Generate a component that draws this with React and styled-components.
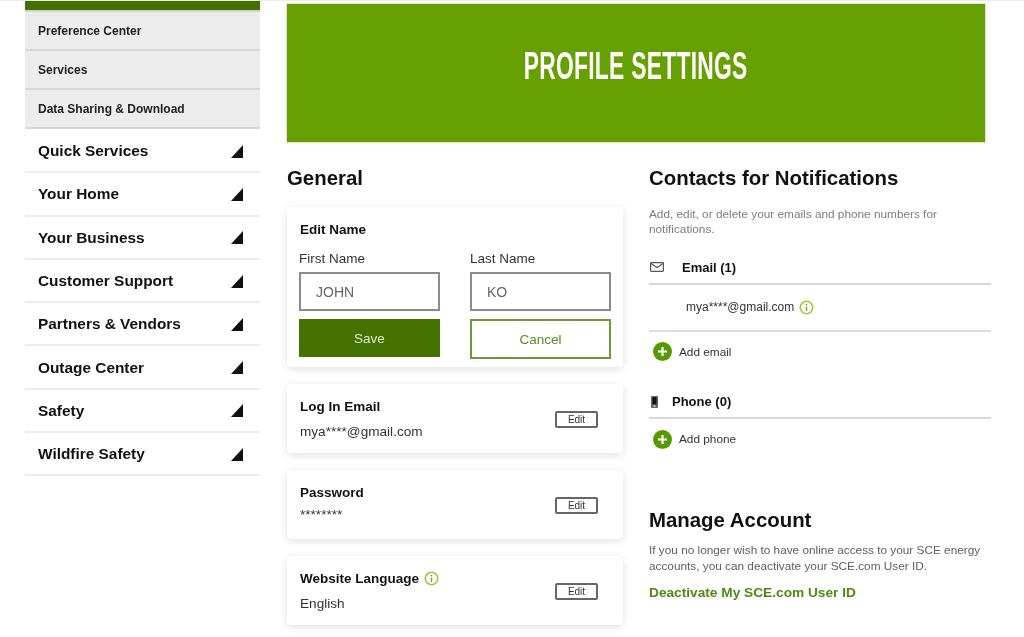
import React from "react";
import styled, { createGlobalStyle } from "styled-components";

const Global = createGlobalStyle`
  html, body { margin: 0; padding: 0; background: #fff; }
  body { font-family: "Liberation Sans", Arial, sans-serif; color: #111; }
  * { box-sizing: border-box; }
`;
const Page = styled.div`
  width: 1024px; height: 637px; overflow: hidden; display: flex; align-items: flex-start;
  padding-left: 25px; border-top: 1px solid #ececec; background: #fff; filter: blur(.3px);
`;
const Sidebar = styled.nav`width: 235px; flex: none; margin-right: 27px; margin-top: -1px;`;
const GreenTop = styled.div`height: 12px; background: #437200; border-bottom: 2px solid #d0d6c6;`;
const SubItem = styled.div`
  height: 39px; background: #ececec; border-bottom: 2px solid #d6d6d6;
  display: flex; align-items: center; padding-left: 13px;
  font-size: 12px; font-weight: 700; color: #222;
`;
const NavList = styled.div`padding-top: 1px;`;
const NavItem = styled.div`
  height: 43.3px; border-bottom: 2px solid #ececec; display: flex; align-items: center;
  justify-content: space-between; padding: 1px 17px 0 13px;
  font-size: 15.4px; font-weight: 700; color: #111;
`;
const Main = styled.main`flex: none; width: 704px; padding-top: 3px;`;
const Banner = styled.div`
  width: 698px; height: 138px; background: #669f00; display: flex; align-items: center; justify-content: center;
  box-shadow: 0 0 0 .5px #b9d28f;
`;
const BannerTitle = styled.h1`
  margin: 0 0 14px; color: #fff; font-size: 38px; line-height: 44px; font-weight: 700; white-space: nowrap;
  transform: scaleX(.6); letter-spacing: .5px;
`;
const Columns = styled.div`display: flex; gap: 26px; padding-top: 24px;`;
const Left = styled.section`width: 336px; flex: none;`;
const Right = styled.section`width: 342px; flex: none;`;
const Heading = styled.h2`margin: 0; font-size: 20.4px; line-height: 24px; font-weight: 700; color: #111;`;
const Card = styled.div`
  background: #fff; border-radius: 4px; box-shadow: 0 2px 9px rgba(0,0,0,.12); margin-top: 17px;
  padding: ${p => p.$edit ? "14px 12px 10px 12px" : "14px 25px 0 13px"}; height: ${p => p.$edit ? "160px" : "69px"};
  display: ${p => p.$edit ? "block" : "flex"}; justify-content: space-between; align-items: center;
`;
const CardTitle = styled.div`
  font-size: 13.5px; line-height: 17px; font-weight: 700; color: #111; display: flex; align-items: center; gap: 1px;
`;
const EditTitle = styled(CardTitle)`padding-left: 1px;`;
const CardValue = styled.div`
  font-size: 13.6px; line-height: 17px; color: #333; margin-top: ${p => p.$stars ? "5px" : "8px"};
`;
const CardText = styled.div`align-self: flex-start;`;
const NameGrid = styled.div`display: grid; grid-template-columns: 141px 141px; column-gap: 30px; margin-top: 13px;`;
const FieldLabel = styled.div`font-size: 13.5px; line-height: 15px; color: #333; margin-bottom: 6px;`;
const Input = styled.div`
  height: 39px; border: 2px solid #8c8c8c; display: flex; align-items: center; padding-left: 15px;
  font-size: 14px; color: #666;
`;
const Btn = styled.div`
  height: ${p => p.$outline ? "40px" : "38px"}; margin-top: 8px; display: flex; align-items: center; justify-content: center;
  font-size: 13.5px; background: ${p => p.$outline ? "#fff" : "#437200"}; color: ${p => p.$outline ? "#5a8a20" : "#dfe8cf"};
  border: ${p => p.$outline ? "2px solid #6c9a38" : "none"};
`;
const EditBtn = styled.div`
  width: 43px; height: 17px; border: 2px solid #666; border-radius: 2px; display: flex; align-items: center;
  justify-content: center; font-size: 10px; color: #333; margin-top: -13px; flex: none;
`;
const Desc = styled.p`margin: 17px 0 0; font-size: 11.8px; line-height: 15px; color: #7c7c7c;`;
const ContactHead = styled.div`
  display: flex; align-items: center; height: 29px; border-bottom: 2px solid #d8d8d8;
  font-size: 13px; font-weight: 700; color: #111; margin-top: 18.5px; padding-bottom: 4px; gap: ${p => p.$gap}px;
`;
const EmailRow = styled.div`
  height: 47px; border-bottom: 2px solid #dcdcdc; display: flex; align-items: center; gap: 1px;
  padding-left: 37px; font-size: 12px; color: #333;
`;
const AddRow = styled.div`
  display: flex; align-items: center; gap: 7px; height: 40px; padding-left: 4px; font-size: 11.8px; color: #333;
`;
const ManageHeading = styled(Heading)`margin-top: 49px;`;
const ManageDesc = styled(Desc)`margin-top: 10px; line-height: 16px; color: #5e5e5e;`;
const DeactivateLink = styled.a`display: block; margin-top: 11px; font-size: 13.7px; font-weight: 700; color: #4f8a10;`;
const MailSvg = styled.svg`flex: none; margin-left: 1px;`;
const PhoneSvg = styled.svg`flex: none; margin-left: 2px;`;
const IconSvg = styled.svg`flex: none;`;
const InfoSvg = styled.svg`flex: none; margin-left: 4px;`;

const Triangle = () => (
  <svg width="12" height="13" viewBox="0 0 12 13"><path d="M12 0V13H0Z" fill="#111" /></svg>
);
const Info = () => (
  <InfoSvg width="15" height="15" viewBox="0 0 15 15" fill="none">
    <circle cx="7.5" cy="7.5" r="6.2" stroke="#a4c93f" strokeWidth="1.6" />
    <path d="M7.5 6.5V11" stroke="#7ea32a" strokeWidth="1.4" />
    <circle cx="7.5" cy="4.6" r=".9" fill="#7ea32a" />
  </InfoSvg>
);
const Plus = () => (
  <IconSvg width="19" height="19" viewBox="0 0 19 19">
    <circle cx="9.5" cy="9.5" r="9.5" fill="#559a05" />
    <path d="M9.5 5V14M5 9.5H14" stroke="#fff" strokeWidth="2.2" />
  </IconSvg>
);
const Mail = () => (
  <MailSvg width="14" height="10" viewBox="0 0 14 10" fill="none">
    <rect x=".6" y=".6" width="12.8" height="8.8" rx=".8" stroke="#555" strokeWidth="1.2" />
    <path d="M1 1.5L7 5.5L13 1.5" stroke="#555" strokeWidth="1.1" />
  </MailSvg>
);
const PhoneIcon = () => (
  <PhoneSvg width="7" height="12" viewBox="0 0 7 12">
    <rect width="7" height="12" rx="1" fill="#666" />
    <rect x="1.5" y="1.2" width="4" height="7" fill="#111" />
    <rect x="2.6" y="9.4" width="1.8" height="1.6" fill="#ddd" />
  </PhoneSvg>
);

const subs = ["Preference Center", "Services", "Data Sharing & Download"];
const navs = ["Quick Services", "Your Home", "Your Business", "Customer Support", "Partners & Vendors", "Outage Center", "Safety", "Wildfire Safety"];

export default function App() {
  return (
    <>
      <Global />
      <Page>
        <Sidebar>
          <GreenTop />
          {subs.map(s => <SubItem key={s}>{s}</SubItem>)}
          <NavList>
            {navs.map(n => <NavItem key={n}>{n}<Triangle /></NavItem>)}
          </NavList>
        </Sidebar>
        <Main>
          <Banner><BannerTitle>PROFILE SETTINGS</BannerTitle></Banner>
          <Columns>
            <Left>
              <Heading>General</Heading>
              <Card $edit>
                <EditTitle>Edit Name</EditTitle>
                <NameGrid>
                  <div><FieldLabel>First Name</FieldLabel><Input>JOHN</Input><Btn>Save</Btn></div>
                  <div><FieldLabel>Last Name</FieldLabel><Input>KO</Input><Btn $outline>Cancel</Btn></div>
                </NameGrid>
              </Card>
              <Card>
                <CardText><CardTitle>Log In Email</CardTitle><CardValue>mya****@gmail.com</CardValue></CardText>
                <EditBtn>Edit</EditBtn>
              </Card>
              <Card>
                <CardText><CardTitle>Password</CardTitle><CardValue $stars>********</CardValue></CardText>
                <EditBtn>Edit</EditBtn>
              </Card>
              <Card>
                <CardText><CardTitle>Website Language <Info /></CardTitle><CardValue>English</CardValue></CardText>
                <EditBtn>Edit</EditBtn>
              </Card>
            </Left>
            <Right>
              <Heading>Contacts for Notifications</Heading>
              <Desc>Add, edit, or delete your emails and phone numbers for<br />notifications.</Desc>
              <ContactHead $gap={18}><Mail />Email (1)</ContactHead>
              <EmailRow>mya****@gmail.com <Info /></EmailRow>
              <AddRow><Plus />Add email</AddRow>
              <ContactHead $gap={14}><PhoneIcon />Phone (0)</ContactHead>
              <AddRow><Plus />Add phone</AddRow>
              <ManageHeading>Manage Account</ManageHeading>
              <ManageDesc>If you no longer wish to have online access to your SCE energy<br />accounts, you can deactivate your SCE.com User ID.</ManageDesc>
              <DeactivateLink>Deactivate My SCE.com User ID</DeactivateLink>
            </Right>
          </Columns>
        </Main>
      </Page>
    </>
  );
}
